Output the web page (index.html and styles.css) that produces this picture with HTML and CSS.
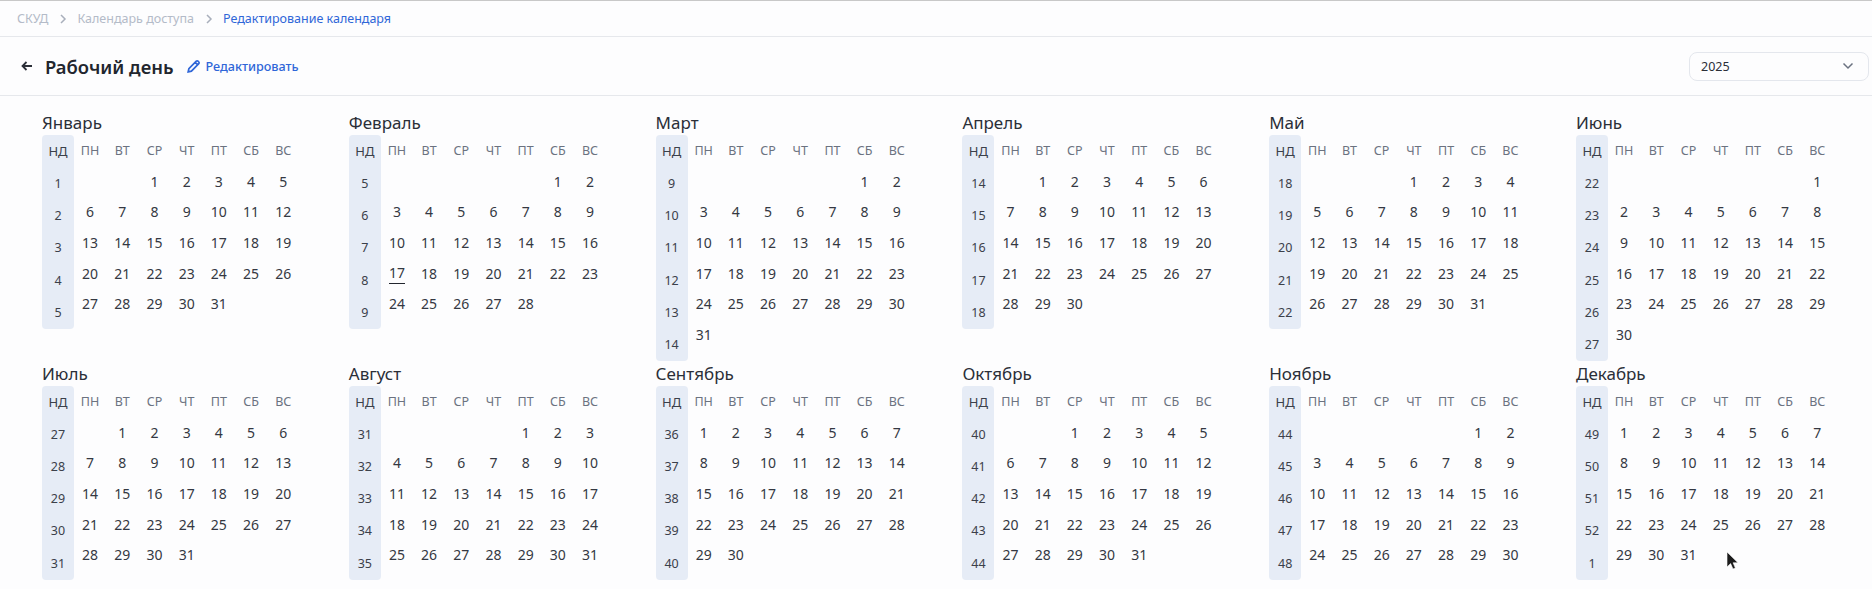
FILE: index.html
```html
<!DOCTYPE html>
<html lang="ru">
<head>
    <meta charset="UTF-8">
    <title>Рабочий день</title>
    <link rel="stylesheet" href="styles.css">
</head>
<body>
    <!-- Breadcrumbs -->
    <nav class="breadcrumbs">
        <span class="crumb">СКУД</span>
        <svg class="crumb-sep" viewBox="0 0 8 10"><path d="M2 1l4 4-4 4"/></svg>
        <span class="crumb">Календарь доступа</span>
        <svg class="crumb-sep" viewBox="0 0 8 10"><path d="M2 1l4 4-4 4"/></svg>
        <span class="crumb current">Редактирование календаря</span>
    </nav>

    <!-- Page header -->
    <header class="page-header">
        <svg class="back-icon" viewBox="0 0 12 12"><path d="M11 6H1.5M5.5 2L1.5 6l4 4"/></svg>
        <h1 class="page-title">Рабочий день</h1>
        <a class="edit-link">
            <svg class="edit-icon" viewBox="0 0 14 14"><path d="M1.2 12.8l.7-3.2 7.4-7.4a1.2 1.2 0 0 1 1.7 0l.8.8a1.2 1.2 0 0 1 0 1.7l-7.4 7.4zM8.2 3.3l2.5 2.5"/></svg>
            Редактировать
        </a>
        <div class="year-select">
            <span>2025</span>
            <svg class="select-arrow" viewBox="0 0 12 8"><path d="M1.5 1.5L6 6l4.5-4.5"/></svg>
        </div>
    </header>

    <main class="year-grid" id="yearGrid"></main>

    <svg class="mouse-cursor" viewBox="0 0 12 19"><path d="M1 1v15l3.6-3.4L7 18l2.4-1-2.3-5.2H12z"/></svg>

    <script src="calendar.js"></script>
</body>
</html>
```

FILE: styles.css
```css
* {
    box-sizing: border-box;
}

body {
    margin: 0;
    height: 589px;
    overflow: hidden;
    background: #fdfdfe;
    border-top: 1px solid #c8c8c8;
    font-family: "Noto Sans", sans-serif;
    color: #2b2f38;
}

.breadcrumbs {
    display: flex;
    align-items: center;
    height: 36px;
    padding-left: 17px;
    border-bottom: 1px solid #e6e8ec;
    font-size: 12.5px;
}

.crumb {
    color: #b4bbc8;
}

.crumb.current {
    color: #2f66d8;
}

.crumb-sep {
    width: 8px;
    height: 10px;
    margin: 0 10.5px;
    fill: none;
    stroke: #a9afbb;
    stroke-width: 1.5;
}

.page-header {
    display: flex;
    align-items: center;
    height: 59px;
    padding: 0 3px 0 21px;
    border-bottom: 1px solid #e6e8ec;
}

.back-icon {
    width: 12px;
    height: 12px;
    fill: none;
    stroke: #2b2f38;
    stroke-width: 1.8;
}

.page-title {
    margin: 0 0 0 12px;
    font-size: 18.4px;
    font-weight: 600;
    color: #22262e;
}

.edit-link {
    display: flex;
    align-items: center;
    gap: 4px;
    margin-left: 14px;
    font-size: 12.6px;
    font-weight: 500;
    color: #2f66d8;
}

.edit-icon {
    width: 14px;
    height: 14px;
    fill: none;
    stroke: #2f66d8;
    stroke-width: 1.7;
}

.year-select {
    display: flex;
    align-items: center;
    justify-content: space-between;
    width: 180px;
    height: 29px;
    margin-left: auto;
    padding: 0 14px 0 11px;
    border: 1px solid #e4e7ed;
    border-radius: 8px;
    font-size: 12.5px;
    color: #2b2f38;
}

.select-arrow {
    width: 12px;
    height: 8px;
    fill: none;
    stroke: #6b7280;
    stroke-width: 1.5;
}

.year-grid {
    display: grid;
    grid-template-columns: repeat(6, 306.8px);
    row-gap: 0.8px;
    padding: 15px 0 0 42px;
}

.month-title {
    font-size: 17px;
    line-height: 24px;
    color: #2b2f38;
}

.month-body {
    display: flex;
}

.weeks {
    width: 32px;
    background: #e6ecf6;
    border-radius: 4px;
    font-size: 12.5px;
    text-align: center;
    color: #3b404a;
}

.weeks div {
    height: 32.2px;
    line-height: 31px;
}

.weeks .week-head {
    height: 33px;
    line-height: 33px;
    font-size: 13px;
}

.days {
    display: grid;
    grid-template-columns: repeat(7, 32.2px);
    grid-template-rows: 30.9px;
    grid-auto-rows: 30.67px;
    font-size: 14px;
    text-align: center;
    align-items: center;
    color: #343842;
}

.day-head {
    font-size: 12.5px;
    color: #6b7280;
}

.today {
    justify-self: center;
    width: 16px;
    height: 21px;
    line-height: 20px;
    border-bottom: 1px solid #22262e;
}

.mouse-cursor {
    position: absolute;
    left: 1726px;
    top: 551px;
    width: 12px;
    height: 19px;
    fill: #1c1c1c;
    stroke: #fff;
    stroke-width: 0.6;
}
```

FILE: calendar.js
```js
// name, empty cells before the 1st, days in month, first week number
var months = [
    ["Январь", 2, 31, 1],
    ["Февраль", 5, 28, 5],
    ["Март", 5, 31, 9],
    ["Апрель", 1, 30, 14],
    ["Май", 3, 31, 18],
    ["Июнь", 6, 30, 22],
    ["Июль", 1, 31, 27],
    ["Август", 4, 31, 31],
    ["Сентябрь", 0, 30, 36],
    ["Октябрь", 2, 31, 40],
    ["Ноябрь", 5, 30, 44],
    ["Декабрь", 0, 31, 49]
];
var dayNames = ["ПН", "ВТ", "СР", "ЧТ", "ПТ", "СБ", "ВС"];

var grid = document.getElementById("yearGrid");

function add(parent, className, text) {
    var el = document.createElement("div");
    el.className = className;
    if (text !== undefined) el.textContent = text;
    parent.appendChild(el);
    return el;
}

months.forEach(function (m, monthIndex) {
    var month = add(grid, "month");
    add(month, "month-title", m[0]);

    var body = add(month, "month-body");
    var weeks = add(body, "weeks");
    var days = add(body, "days");

    add(weeks, "week-head", "НД");
    var weekCount = Math.ceil((m[1] + m[2]) / 7);
    for (var w = 0; w < weekCount; w++) {
        var num = m[3] + w;
        add(weeks, "week", num > 52 ? num - 52 : num);
    }

    dayNames.forEach(function (name) {
        add(days, "day-head", name);
    });
    for (var i = 0; i < m[1]; i++) add(days, "day");
    for (var d = 1; d <= m[2]; d++) {
        var isToday = monthIndex === 1 && d === 17;
        add(days, isToday ? "day today" : "day", d);
    }
});
```
